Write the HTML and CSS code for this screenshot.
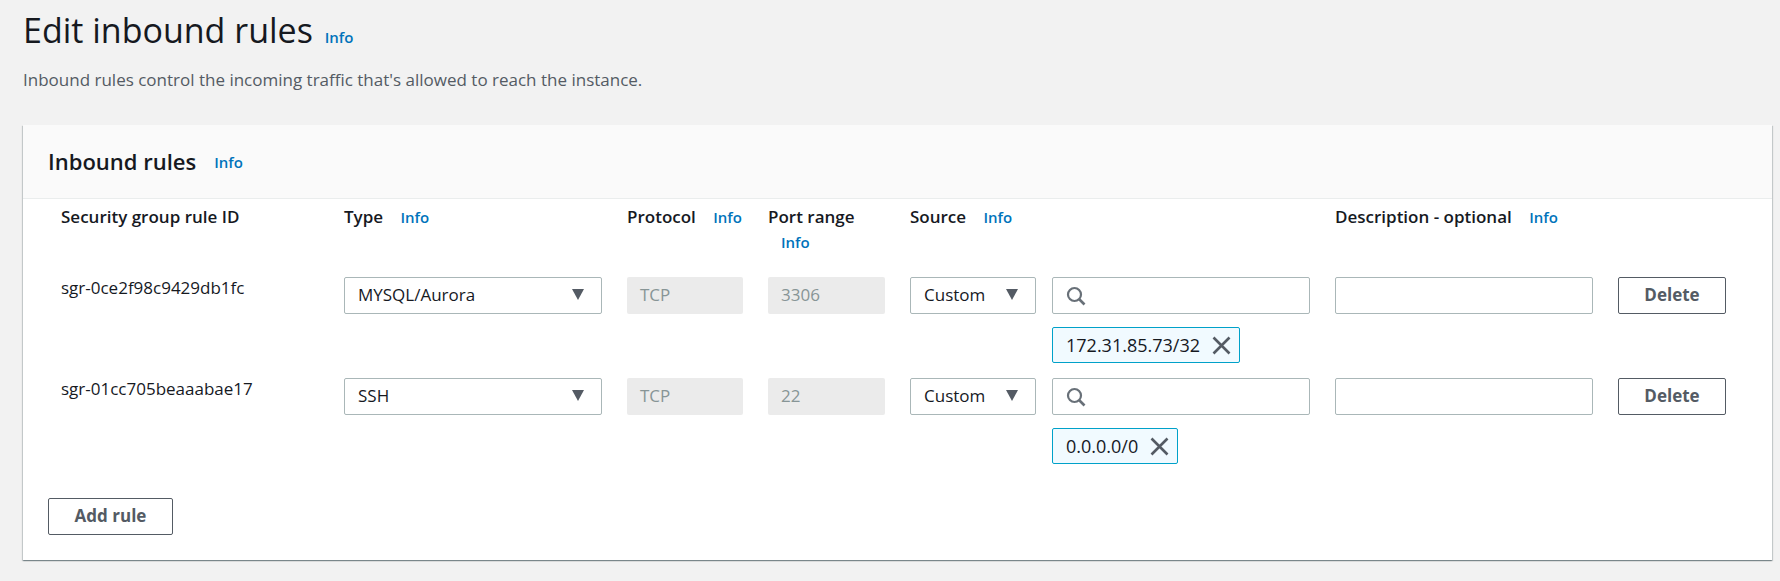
FILE: index.html
```html
<!DOCTYPE html>
<html lang="en">

<head>
  <meta charset="UTF-8">
  <title>Edit inbound rules</title>
  <link rel="stylesheet" href="styles.css">
</head>

<body>
  <div class="page-head">
    <h1>Edit inbound rules <a class="info" href="#">Info</a></h1>
    <p>Inbound rules control the incoming traffic that's allowed to reach the instance.</p>
  </div>

  <div class="card">
    <div class="card-head">
      <h2>Inbound rules</h2>
      <a class="info" href="#">Info</a>
    </div>
    <div class="card-body">
      <div class="rules">
        <!-- header -->
        <div class="label">Security group rule ID</div>
        <div class="label">Type <a class="info" href="#">Info</a></div>
        <div class="label">Protocol <a class="info" href="#">Info</a></div>
        <div class="label">Port range <a class="info info-block" href="#">Info</a></div>
        <div class="label">Source <a class="info" href="#">Info</a></div>
        <div class="label">Description - optional <a class="info" href="#">Info</a></div>
        <div></div>

        <!-- row 1 -->
        <div class="rule-id">sgr-0ce2f98c9429db1fc</div>
        <div class="select"><span>MYSQL/Aurora</span><i class="caret"></i></div>
        <div class="disabled">TCP</div>
        <div class="disabled">3306</div>
        <div class="source">
          <div class="source-top">
            <div class="select select-small"><span>Custom</span><i class="caret"></i></div>
            <div class="search">
              <svg width="20" height="20" viewBox="0 0 20 20"><circle cx="8.5" cy="8.5" r="6.5" fill="none" stroke="#687078" stroke-width="2.2"/><path d="M13 13L18.5 18.5" stroke="#687078" stroke-width="2.6" fill="none"/></svg>
            </div>
          </div>
          <div class="chip chip-wide">172.31.85.73/32
            <svg width="19" height="19" viewBox="0 0 19 19"><path d="M1.5 1.5L17.5 17.5M17.5 1.5L1.5 17.5" stroke="#545b64" stroke-width="2.6" fill="none"/></svg>
          </div>
        </div>
        <div class="field"></div>
        <button class="btn">Delete</button>

        <!-- row 2 -->
        <div class="rule-id">sgr-01cc705beaaabae17</div>
        <div class="select"><span>SSH</span><i class="caret"></i></div>
        <div class="disabled">TCP</div>
        <div class="disabled">22</div>
        <div class="source">
          <div class="source-top">
            <div class="select select-small"><span>Custom</span><i class="caret"></i></div>
            <div class="search">
              <svg width="20" height="20" viewBox="0 0 20 20"><circle cx="8.5" cy="8.5" r="6.5" fill="none" stroke="#687078" stroke-width="2.2"/><path d="M13 13L18.5 18.5" stroke="#687078" stroke-width="2.6" fill="none"/></svg>
            </div>
          </div>
          <div class="chip">0.0.0.0/0
            <svg width="19" height="19" viewBox="0 0 19 19"><path d="M1.5 1.5L17.5 17.5M17.5 1.5L1.5 17.5" stroke="#545b64" stroke-width="2.6" fill="none"/></svg>
          </div>
        </div>
        <div class="field"></div>
        <button class="btn">Delete</button>
      </div>
      <button class="btn btn-add">Add rule</button>
    </div>
  </div>
</body>

</html>
```

FILE: styles.css
```css
* {
  padding: 0;
  margin: 0;
  box-sizing: border-box;
}

body {
  height: 581px;
  padding: 0 8px 0 23px;
  overflow: hidden;
  background: #f2f2f2;
  color: #16191f;
  font-family: "Open Sans", "Noto Sans", sans-serif;
  font-size: 17px;
}

a {
  text-decoration: none;
}

.info {
  color: #0073bb;
  font-size: 15px;
  font-weight: 600;
}

.page-head h1 {
  height: 60px;
  padding-top: 9px;
  font-size: 34px;
  line-height: 42px;
  font-weight: 400;
}

.page-head h1 .info {
  margin-left: 3px;
}

.page-head p {
  height: 65px;
  padding-top: 9px;
  color: #545b64;
  font-size: 17px;
  line-height: 22px;
}

.card {
  height: 435px;
  background: #fff;
  box-shadow: 0 1px 1px 0 rgba(0, 28, 36, .3), 1px 1px 1px 0 rgba(0, 28, 36, .15), -1px 1px 1px 0 rgba(0, 28, 36, .15);
}

.card-head {
  display: flex;
  align-items: center;
  gap: 18px;
  height: 74px;
  padding-left: 25px;
  background: #fafafa;
  border-bottom: 1px solid #eaeded;
}

.card-head h2 {
  padding-bottom: 2px;
  font-size: 22px;
  font-weight: 600;
}

.card-body {
  padding: 7px 0 0 25px;
}

.rules {
  display: grid;
  grid-template-columns: 258px 258px 116px 117px 400px 258px 108px;
  grid-template-rows: 56px 86px 86px;
  gap: 15px 25px;
  padding-left: 13px;
  margin-bottom: 34px;
}

.label {
  font-size: 17px;
  font-weight: 600;
  line-height: 22px;
  white-space: nowrap;
}

.label .info {
  margin-left: 13px;
}

.label .info-block {
  display: block;
  margin-top: 3px;
}

.rule-id {
  font-size: 17px;
  line-height: 22px;
}

.select,
.disabled,
.search,
.field {
  height: 37px;
  border-radius: 2px;
}

.select,
.search,
.field {
  background: #fff;
  border: 1px solid #aab7b8;
}

.select {
  display: flex;
  align-items: center;
  justify-content: space-between;
  padding: 0 17px 2px 13px;
}

.select-small {
  flex: 0 0 126px;
}

.caret {
  width: 0;
  height: 0;
  border-left: 6.5px solid transparent;
  border-right: 6.5px solid transparent;
  border-top: 11px solid #545b64;
}

.disabled {
  display: flex;
  align-items: center;
  padding: 0 0 2px 13px;
  background: #ebebeb;
  color: #879596;
}

.source-top {
  display: flex;
  gap: 16px;
  margin-bottom: 13px;
}

.search {
  display: flex;
  align-items: center;
  flex: 1;
  padding-left: 13px;
}

.chip {
  display: inline-flex;
  align-items: center;
  gap: 12px;
  height: 36px;
  margin-left: 142px;
  padding: 0 8px 0 13px;
  background: #f1faff;
  border: 1px solid #00a1c9;
  border-radius: 2px;
  font-size: 18px;
}

.btn {
  height: 37px;
  padding-bottom: 2px;
  background: #fff;
  border: 1px solid #545b64;
  border-radius: 2px;
  color: #545b64;
  font-family: inherit;
  font-size: 17px;
  font-weight: 700;
}

.btn-add {
  width: 125px;
}
```
